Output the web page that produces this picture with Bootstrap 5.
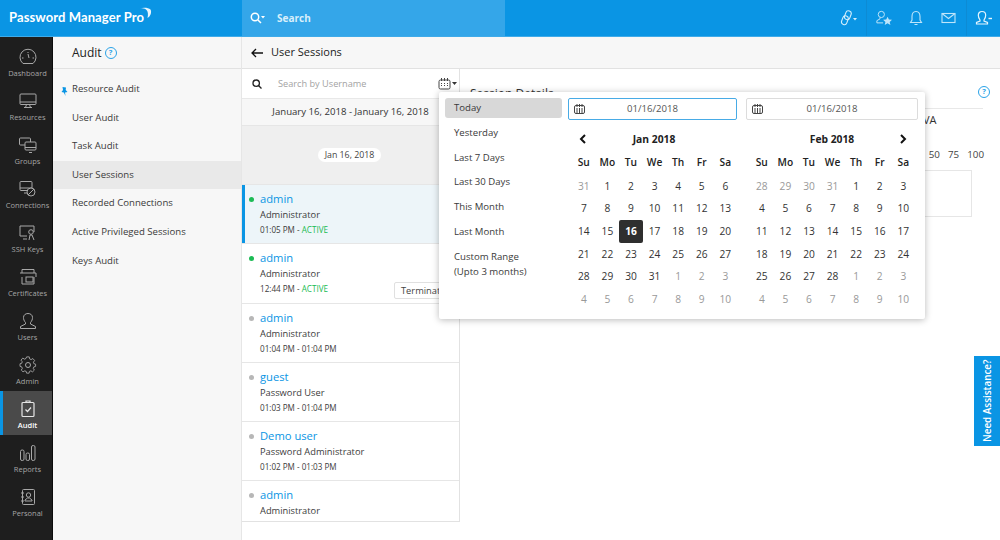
<!DOCTYPE html>
<html lang="en"><head><meta charset="utf-8"><title>Password Manager Pro</title>
<link href="https://cdn.jsdelivr.net/npm/bootstrap@5.3.0/dist/css/bootstrap.min.css" rel="stylesheet">
<style>
html,body{height:540px;overflow:hidden}
body{font-family:"Open Sans","Liberation Sans",sans-serif;font-size:10px;color:#333;background:#fff;position:relative}
.app-top{height:37px;background:#0a95e4;border-bottom:1px solid #3fabe9}
.brand-box{width:242px;padding-left:9px;padding-bottom:1px;color:#fff;font-family:Lato,sans-serif;font-weight:700;font-size:13px;letter-spacing:.1px}
.brand-swoosh{margin-left:-6px;margin-top:-8px}
.top-search{width:263px;background:#34a6e9;color:#d8effb;font-size:10px;font-weight:700;padding-left:8px;gap:8px}
.top-tools{flex:1}
.tool{height:36px;border-left:1px solid #0d8bd4}
.tool-a{width:34px}.tool-b{width:33px;border:0;padding-right:2px}.tool-c{width:34px}
.app-body{height:503px}
.rail{width:53px;background:#1e1e1e;border-right:1px solid #0c0c0c;padding-top:2px;flex:none}
.rail-item{height:44px;color:#a5a5a5;font-size:7.5px;line-height:10px;display:flex;flex-direction:column;align-items:center;justify-content:flex-end;padding-bottom:5px;padding-left:3px;gap:2px;white-space:nowrap}
.rail-item svg{display:block}
.rail-on{background:#4a4a4a;color:#fff;font-weight:600;border-left:3px solid #0a95e4;padding-left:0}
.subnav{width:189px;background:#f7f7f7;border-right:1px solid #e6e6e6;flex:none}
.head-bar{height:32px;background:#f7f7f7;border-bottom:1px solid #e2e2e2;font-size:12px;color:#222}
.sub-head{padding-left:19px;gap:3px}
.sub-list{padding-top:6px}
.sub-link{height:28.6px;padding-left:19px;font-size:9.6px;color:#3a3a3a;display:flex;align-items:center;position:relative}
.sub-on{background:#e9e9e9}
.pin{position:absolute;left:8px;top:12px}
.main-col{flex:1;min-width:0}
.main-head{padding-left:9px;gap:8px;font-size:11px;font-weight:400}
.list-col{width:218px;border-right:1px solid #e2e2e2;height:453px;flex:none;border-bottom:1px solid #e2e2e2}
.search-row{height:30px;border-bottom:1px solid #e8e8e8;padding-left:10px;color:#a3a3a3;font-size:9.2px;gap:16px}
.cal-btn{margin-left:auto;margin-right:2px;gap:1px}
.range-row{height:27px;background:#f7f7f7;border-bottom:1px solid #e6e6e6;font-size:9.6px;color:#333;justify-content:center}
.day-band{height:59px;background:#efefef;border-bottom:1px solid #e6e6e6;padding-right:2px}
.day-pill{background:#fff;border-radius:9px;padding:2px 7px;font-size:8.8px;line-height:10px;color:#444}
.sess{height:59.3px;border-bottom:1px solid #e6e6e6;padding:7px 0 0 18px;position:relative;line-height:15px;font-size:9.3px;color:#3b3b3b}
.sess-on{background:#edf5f9;box-shadow:inset 3px 0 0 #0a95e4}
.sess-last{height:40px;border-bottom:0}
.dot{position:absolute;left:7px;top:12px;width:5px;height:5px;border-radius:50%;background:#b7b7b7}
.dot-on{background:#1cbb55}
.who{color:#0a95e4;font-size:11.2px;line-height:14px;margin-bottom:1px;display:block}
.when{font-size:8.1px;display:block}
.live{color:#18bb52}
.end-btn{position:absolute;left:152px;top:38px;font-size:9.3px;line-height:13px;padding:1px 6px;border:1px solid #e0e0e0;background:#fff;color:#444;border-radius:2px}
.detail-col{flex:1;padding:0 17px 0 10px;position:relative;min-width:0}
.detail-head{height:40px;border-bottom:1px solid #e8e8e8;font-size:12px;color:#333;padding-top:16px}
.detail-va{font-size:11px;height:40px;padding-top:3px;padding-left:453px;line-height:15px;color:#333;white-space:nowrap}
.scale{gap:8px;justify-content:flex-end;font-size:9.8px;line-height:12px;color:#444;margin-right:-1px;padding-right:0}
.det-box{height:47px;width:60px;margin:9px 11px 0 auto;border:1px solid #e6e6e6}
.pick{position:absolute;left:439px;top:92px;width:486px;height:227px;background:#fff;border-radius:2px;box-shadow:0 1px 7px rgba(0,0,0,.28);padding:6px 7px 0 6px;gap:6px;z-index:5}
.pick-side{width:117px;flex:none}
.pick-opt{height:24.8px;padding-left:9px;font-size:9.6px;line-height:20px;color:#3a3a3a}
.pick-cur{height:20px;background:#d8d8d8;border-radius:3px;margin-bottom:4.8px}
.pick-two{line-height:15px;height:auto;padding-top:2px}
.pick-pane{width:169px}
.pick-pane+.pick-pane{width:172px;margin-left:3px}
.date-box{height:22px;border:1px solid #dcdcdc;border-radius:2px;font-size:9.6px;color:#555;position:relative;text-align:center;line-height:20px}
.date-on{border-color:#48abe6}
.date-box svg{position:absolute;left:5px;top:5px}
.month{height:23px;margin-top:10px;font-size:10.3px;font-weight:700;color:#222;position:relative;text-align:center;line-height:19px;padding-left:3px}
.pane-b .month{padding-left:0}
.arrow{position:absolute;top:4px}
.days{display:grid;grid-template-columns:repeat(7,23.6px);grid-auto-rows:22.67px;margin-top:-1px;margin-left:4px;font-size:10.2px;text-align:center;line-height:22px;color:#333}
.days b{font-weight:600;color:#222;line-height:20px}
.days i{font-style:normal;color:#999}
.days u{text-decoration:none;background:#2f2f2f;color:#fff;font-weight:700;border-radius:2px}
.help-tab{position:absolute;left:974px;top:356px;width:26px;height:90px;background:#0a95e4;color:#fff;font-size:9.9px;font-weight:600;writing-mode:vertical-rl;transform:rotate(180deg);text-align:center;line-height:26px;white-space:nowrap}
.qmark{width:12px;height:12px;border:1.3px solid #2aa3e8;border-radius:50%;color:#2aa3e8;font-size:7.5px;font-weight:700;line-height:9.5px;text-align:center;flex:none}
.qmark-pos{position:absolute;right:10px;top:17px}
</style></head>
<body>
<header class="app-top d-flex">
  <div class="brand-box d-flex align-items-center">Password Manager Pro<svg class="brand-swoosh" width="14" height="14" viewBox="0 0 14 14"><path d="M2 1.500C7 .5 11.500 3 9.500 11 12.500 9.500 14 5 12.500 2.500 10.500.5 5 0 2 1.500Z" fill="#fff" opacity=".9"/></svg></div>
  <div class="top-search d-flex align-items-center"><svg width="15" height="12" viewBox="0 0 15 12" fill="none" stroke="#fff" stroke-width="1.500"><circle cx="5" cy="5" r="3.700"/><path d="M8 8l3 3"/><path d="M11 4h4l-2 2.500z" fill="#fff" stroke="none"/></svg><span class="ms-1">Search</span></div>
  <div class="top-tools d-flex justify-content-end">
    <div class="tool tool-a border-0 d-flex align-items-center justify-content-center"><svg width="18" height="16" viewBox="0 0 18 16" fill="none" stroke="#d6effc" stroke-width="1.100"><rect x="5.200" y=".8" width="5.500" height="9" rx="2.700" transform="rotate(20 8 5)"/><rect x="2.200" y="5.800" width="5.500" height="9" rx="2.700" transform="rotate(20 5 10)"/><path d="M13 8h4l-2 2.500z" fill="#d6effc" stroke="none"/></svg></div>
    <div class="tool tool-c d-flex align-items-center justify-content-center"><svg width="18" height="16" viewBox="0 0 20 18" fill="none" stroke="#bfe5fa" stroke-width="1.100"><circle cx="7" cy="5" r="3.500"/><path d="M5.500 8.500v1.500L2 12v2.500h7"/><path d="M14 7.500l1.500 3.200 3.500.4-2.600 2.300.8 3.400-3.200-1.800-3.200 1.800.8-3.400-2.600-2.300 3.500-.4z" fill="#bfe5fa" stroke="none"/></svg></div>
    <div class="tool tool-b d-flex align-items-center justify-content-center"><svg width="14" height="16" viewBox="0 0 14 16" fill="none" stroke="#bfe5fa" stroke-width="1.100"><path d="M7 1.500c-3 0-4 2.500-4 5v3.500L1.500 12.500h11L11 10V6.500c0-2.500-1-5-4-5ZM5.500 14.500h3"/></svg></div>
    <div class="tool tool-b d-flex align-items-center justify-content-center"><svg width="16" height="12" viewBox="0 0 16 12" fill="none" stroke="#bfe5fa" stroke-width="1.100"><rect x="1" y="1.500" width="13" height="9"/><path d="M1 1.500l6.500 5 6.500-5"/></svg></div>
    <div class="tool tool-a d-flex align-items-center justify-content-center"><svg width="18" height="16" viewBox="0 0 18 16" fill="none" stroke="#e5f5fe" stroke-width="1.200"><path d="M5 10c-1-1.500-1.700-3-1.700-4.800C3.300 3 5 1.500 7 1.500s3.700 1.500 3.700 3.700c0 1.800-.7 3.300-1.700 4.800v1l3.500 1.500v1.500h-11V12.500L5 11z"/><path d="M13.500 8.500h3.500" stroke-width="1.400"/></svg></div>
  </div>
</header>
<div class="app-body d-flex">
  <nav class="rail">
    <div class="rail-item"><svg width="20" height="18" viewBox="0 0 20 18" fill="none" stroke="#a8a8a8"><path d="M5 15.500a8 8 0 1 1 10 0z"/><path d="M10 6l1 4M4 10h1.500M14.500 10H16M10 4v1"/></svg>Dashboard</div>
    <div class="rail-item"><svg width="20" height="18" viewBox="0 0 20 18" fill="none" stroke="#a8a8a8"><rect x="2" y="2" width="16" height="10.500" rx="1"/><path d="M2 10h16M8.500 12.500l-1 3M11.500 12.500l1 3M6 15.500h8"/></svg>Resources</div>
    <div class="rail-item"><svg width="20" height="18" viewBox="0 0 20 18" fill="none" stroke="#a8a8a8"><rect x="1.500" y="2" width="11" height="7" rx="1"/><rect x="7" y="6" width="11" height="8" rx="1" fill="#1e1e1e"/><path d="M7 11.500h11M11 16.500h3"/></svg>Groups</div>
    <div class="rail-item"><svg width="20" height="18" viewBox="0 0 20 18" fill="none" stroke="#a8a8a8"><rect x="2" y="1.500" width="12" height="9" rx="1"/><path d="M2 8h12M6 13h3"/><circle cx="13" cy="12" r="4" fill="#1e1e1e"/><path d="M10 15l6-6"/></svg>Connections</div>
    <div class="rail-item"><svg width="20" height="18" viewBox="0 0 20 18" fill="none" stroke="#a8a8a8"><path d="M9 12H2V2h14v6"/><circle cx="13" cy="8" r="2.300"/><path d="M11 16l1-5h2l2 5M5 15h4"/></svg>SSH Keys</div>
    <div class="rail-item"><svg width="20" height="18" viewBox="0 0 20 18" fill="none" stroke="#a8a8a8"><path d="M4 5V1.500h12V5M2 5h16v4M4 9v7h12V9"/><rect x="8" y="9" width="7" height="5"/></svg>Certificates</div>
    <div class="rail-item"><svg width="20" height="18" viewBox="0 0 20 18" fill="none" stroke="#a8a8a8"><path d="M7.500 10.500C6 9 5.500 7 5.500 5.500 5.500 3 7.500 1.500 10 1.500s4.500 1.500 4.500 4c0 1.500-.5 3.500-2 5v1.500l5 2.500v2h-15v-2l5-2.500z"/></svg>Users</div>
    <div class="rail-item"><svg width="20" height="18" viewBox="0 0 20 18" fill="none" stroke="#a8a8a8"><path d="M8.500 1h3l.4 2.300 1.700.8 2-1.200 2 2.300-1.400 1.800.5 1.700 2 .6v2.500l-2 .6-.6 1.800 1.200 1.800-2 2-2-1.100-1.600.6-.4 2H8.500l-.5-2-1.600-.6-2 1.100-2-2 1.200-1.800-.6-1.800-2-.6V8.800l2-.6.5-1.700L2.100 4.700l2-2.300 2 1.200 1.700-.8z" transform="scale(.88) translate(1.300 0)"/><circle cx="10" cy="9" r="2.500"/></svg>Admin</div>
    <div class="rail-item rail-on"><svg width="20" height="18" viewBox="0 0 20 18" fill="none" stroke="#e6e6e6" stroke-width="1.200"><rect x="4" y="2.500" width="12" height="14" rx="1"/><path d="M8 2.500V1h4v1.500M7.500 9.500l2 2 3.500-4"/></svg>Audit</div>
    <div class="rail-item"><svg width="20" height="18" viewBox="0 0 20 18" fill="none" stroke="#a8a8a8"><rect x="2.500" y="6" width="3.500" height="10.500" rx="1.500"/><rect x="8" y="9" width="3.500" height="7.500" rx="1.500"/><rect x="13.500" y="1.500" width="3.500" height="15" rx="1.500"/></svg>Reports</div>
    <div class="rail-item"><svg width="20" height="18" viewBox="0 0 20 18" fill="none" stroke="#a8a8a8"><rect x="4.500" y="1.500" width="12" height="15" rx="1"/><path d="M3 5h3M3 9h3M3 13h3"/><circle cx="10.500" cy="7" r="2.200"/><path d="M7 13v-1l2.500-2h2l2.500 2v1z"/></svg>Personal</div>
  </nav>
  <aside class="subnav">
    <div class="head-bar sub-head d-flex align-items-center">Audit<span class="qmark">?</span></div>
    <div class="sub-list">
      <div class="sub-link"><svg class="pin" width="7" height="9" viewBox="0 0 7 9"><path d="M1.500 0l3.500.5-.3 2.500L6.500 5 4 5.500 4.500 9 2.800 5.500.5 5l1.500-2z" fill="#0a95e4"/></svg>Resource Audit</div>
      <div class="sub-link">User Audit</div>
      <div class="sub-link">Task Audit</div>
      <div class="sub-link sub-on">User Sessions</div>
      <div class="sub-link">Recorded Connections</div>
      <div class="sub-link">Active Privileged Sessions</div>
      <div class="sub-link">Keys Audit</div>
    </div>
  </aside>
  <main class="main-col">
    <div class="head-bar main-head d-flex align-items-center"><svg width="12" height="10" viewBox="0 0 12 10" fill="none" stroke="#111" stroke-width="1.300"><path d="M12 5H1M5 1L1 5l4 4"/></svg>User Sessions</div>
    <div class="d-flex">
      <section class="list-col">
        <div class="search-row d-flex align-items-center"><svg width="10" height="10" viewBox="0 0 10 10" fill="none" stroke="#222" stroke-width="1.300"><circle cx="4.200" cy="4.200" r="3.200"/><path d="M6.700 6.700L9.500 9.500"/></svg><span>Search by Username</span>
          <span class="cal-btn d-flex align-items-center"><svg width="13" height="12" viewBox="0 0 13 12" fill="none" stroke="#444"><rect x="1" y="2" width="11" height="9" rx="1.500"/><path d="M3.500 0v3M6.500 0v3M9.500 0v3" /><path d="M3.500 5v4M6.500 5v4M9.500 5v4" stroke-dasharray="1 1"/></svg><svg width="5" height="3" viewBox="0 0 5 3"><path d="M0 0h5L2.500 3z" fill="#333"/></svg></span></div>
        <div class="range-row d-flex align-items-center">January 16, 2018 - January 16, 2018</div>
        <div class="day-band d-flex align-items-center justify-content-center"><span class="day-pill">Jan 16, 2018</span></div>
        <div class="sess sess-on"><span class="dot dot-on"></span><span class="who">admin</span>Administrator<span class="when">01:05 PM - <span class="live">ACTIVE</span></span></div>
        <div class="sess"><span class="dot dot-on"></span><span class="who">admin</span>Administrator<span class="when">12:44 PM - <span class="live">ACTIVE</span></span><span class="end-btn">Terminate</span></div>
        <div class="sess"><span class="dot"></span><span class="who">admin</span>Administrator<span class="when">01:04 PM - 01:04 PM</span></div>
        <div class="sess"><span class="dot"></span><span class="who">guest</span>Password User<span class="when">01:03 PM - 01:04 PM</span></div>
        <div class="sess"><span class="dot"></span><span class="who">Demo user</span>Password Administrator<span class="when">01:02 PM - 01:03 PM</span></div>
        <div class="sess sess-last"><span class="dot"></span><span class="who">admin</span>Administrator</div>
      </section>
      <section class="detail-col">
        <div class="detail-head">Session Details</div>
        <span class="qmark qmark-pos">?</span>
        <div class="detail-va">VA</div>
        <div class="scale d-flex"><span>50</span><span>75</span><span>100</span></div>
        <div class="det-box"></div>
      </section>
    </div>
  </main>
</div>
<div class="pick d-flex">
  <div class="pick-side">
    <div class="pick-opt pick-cur">Today</div>
    <div class="pick-opt">Yesterday</div>
    <div class="pick-opt">Last 7 Days</div>
    <div class="pick-opt">Last 30 Days</div>
    <div class="pick-opt">This Month</div>
    <div class="pick-opt">Last Month</div>
    <div class="pick-opt pick-two">Custom Range<br>(Upto 3 months)</div>
  </div>
  <div class="pick-pane">
    <div class="date-box date-on"><svg width="11" height="10" viewBox="0 0 11 10" fill="none" stroke="#444"><rect x=".5" y="1.500" width="10" height="8" rx="1.500"/><path d="M3 0v3M5.500 0v3M8 0v3M3 4v5M5.500 4v5M8 4v5"/></svg>01/16/2018</div>
    <div class="month"><svg class="arrow" style="left:11px" width="8" height="10" viewBox="0 0 8 10" fill="none" stroke="#111" stroke-width="2"><path d="M6 1L2 5l4 4"/></svg>Jan 2018</div>
    <div class="days"><b>Su</b><b>Mo</b><b>Tu</b><b>We</b><b>Th</b><b>Fr</b><b>Sa</b>
      <i>31</i><span>1</span><span>2</span><span>3</span><span>4</span><span>5</span><span>6</span>
      <span>7</span><span>8</span><span>9</span><span>10</span><span>11</span><span>12</span><span>13</span>
      <span>14</span><span>15</span><u>16</u><span>17</span><span>18</span><span>19</span><span>20</span>
      <span>21</span><span>22</span><span>23</span><span>24</span><span>25</span><span>26</span><span>27</span>
      <span>28</span><span>29</span><span>30</span><span>31</span><i>1</i><i>2</i><i>3</i>
      <i>4</i><i>5</i><i>6</i><i>7</i><i>8</i><i>9</i><i>10</i></div>
  </div>
  <div class="pick-pane pane-b">
    <div class="date-box"><svg width="11" height="10" viewBox="0 0 11 10" fill="none" stroke="#444"><rect x=".5" y="1.500" width="10" height="8" rx="1.500"/><path d="M3 0v3M5.500 0v3M8 0v3M3 4v5M5.500 4v5M8 4v5"/></svg>01/16/2018</div>
    <div class="month">Feb 2018<svg class="arrow" style="right:11px" width="8" height="10" viewBox="0 0 8 10" fill="none" stroke="#111" stroke-width="2"><path d="M2 1l4 4-4 4"/></svg></div>
    <div class="days"><b>Su</b><b>Mo</b><b>Tu</b><b>We</b><b>Th</b><b>Fr</b><b>Sa</b>
      <i>28</i><i>29</i><i>30</i><i>31</i><span>1</span><span>2</span><span>3</span>
      <span>4</span><span>5</span><span>6</span><span>7</span><span>8</span><span>9</span><span>10</span>
      <span>11</span><span>12</span><span>13</span><span>14</span><span>15</span><span>16</span><span>17</span>
      <span>18</span><span>19</span><span>20</span><span>21</span><span>22</span><span>23</span><span>24</span>
      <span>25</span><span>26</span><span>27</span><span>28</span><i>1</i><i>2</i><i>3</i>
      <i>4</i><i>5</i><i>6</i><i>7</i><i>8</i><i>9</i><i>10</i></div>
  </div>
</div>
<div class="help-tab">Need Assistance?</div>
<script src="https://cdn.jsdelivr.net/npm/bootstrap@5.3.0/dist/js/bootstrap.bundle.min.js"></script>
</body></html>
